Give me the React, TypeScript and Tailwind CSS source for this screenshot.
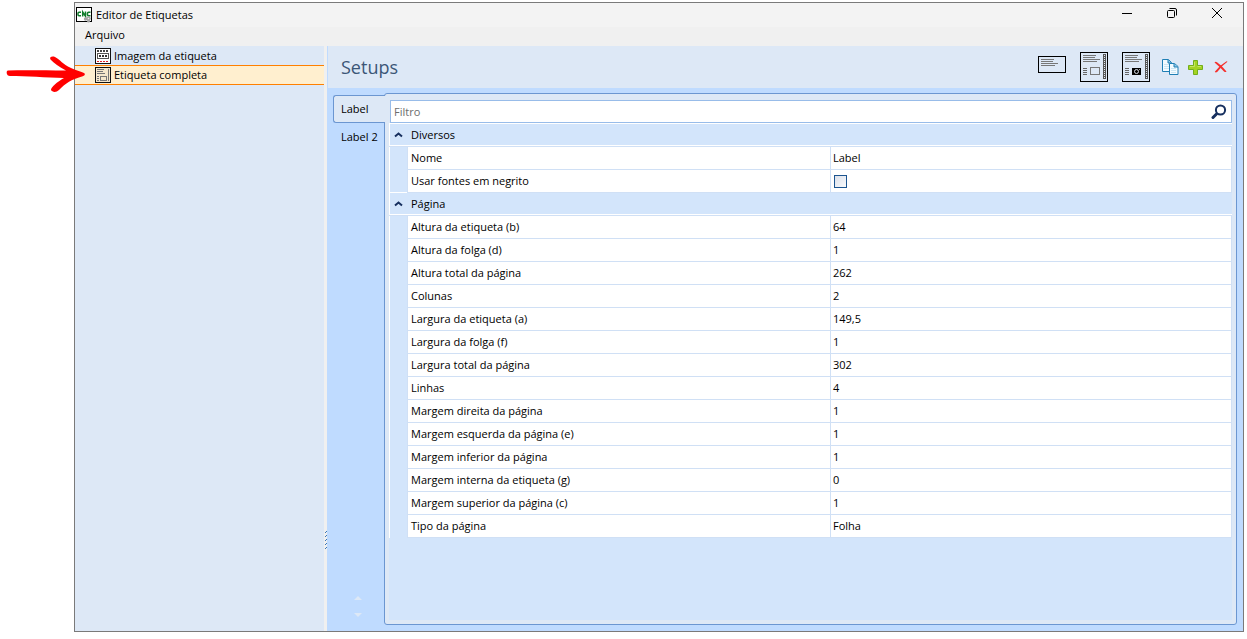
import React, { useState } from "react";

interface Property {
  name: string;
  value: string | boolean;
}

interface Category {
  title: string;
  items: Property[];
}

const categories: Category[] = [
  {
    title: "Diversos",
    items: [
      { name: "Nome", value: "Label" },
      { name: "Usar fontes em negrito", value: false },
    ],
  },
  {
    title: "Página",
    items: [
      { name: "Altura da etiqueta (b)", value: "64" },
      { name: "Altura da folga (d)", value: "1" },
      { name: "Altura total da página", value: "262" },
      { name: "Colunas", value: "2" },
      { name: "Largura da etiqueta (a)", value: "149,5" },
      { name: "Largura da folga (f)", value: "1" },
      { name: "Largura total da página", value: "302" },
      { name: "Linhas", value: "4" },
      { name: "Margem direita da página", value: "1" },
      { name: "Margem esquerda da página (e)", value: "1" },
      { name: "Margem inferior da página", value: "1" },
      { name: "Margem interna da etiqueta (g)", value: "0" },
      { name: "Margem superior da página (c)", value: "1" },
      { name: "Tipo da página", value: "Folha" },
    ],
  },
];

function AppIcon() {
  return (
    <svg width="16" height="16" viewBox="0 0 16 16" fill="none">
      <rect x="0.5" y="0.5" width="15" height="14" fill="#fff" stroke="#000" />
      <path
        d="M5 5.2H3Q2 5.200 2 6.200V7.800Q2 8.800 3 8.800H5M6.700 9.500V5l2.800 4.200V4.500M14.500 5.200H12.500Q11.500 5.200 11.500 6.200V7.800Q11.500 8.800 12.500 8.800H14.500"
        stroke="#0f7d2b"
        strokeWidth="1.500"
      />
      <g fill="#a5a5a5">
        <circle cx="9.500" cy="12" r="1.700" />
        <circle cx="12.500" cy="11.500" r="2.200" />
        <circle cx="12.500" cy="14" r="1.500" />
      </g>
      <circle cx="12.500" cy="11.500" r="0.800" fill="#eee" />
    </svg>
  );
}

function ImageLabelIcon() {
  return (
    <svg width="16" height="16" viewBox="0 0 16 16" shapeRendering="crispEdges" fill="none">
      <rect x="0.5" y="0.5" width="15" height="15" fill="#fff" stroke="#111" />
      <path d="M2 3h12" stroke="#444" strokeWidth="2" strokeDasharray="2 1" />
      <rect x="2.500" y="5.500" width="11" height="5" stroke="#555" />
      <path d="M4 8h8" stroke="#333" strokeWidth="2" strokeDasharray="2 1" />
      <path d="M2 13.500h12" stroke="#e0202a" strokeDasharray="2 1" />
    </svg>
  );
}

function FullLabelIcon() {
  return (
    <svg width="16" height="16" viewBox="0 0 16 16" shapeRendering="crispEdges" fill="none">
      <rect x="0.5" y="0.5" width="15" height="15" fill="#f5e7cc" stroke="#111" />
      <path d="M2 2.500h7M2 4.500h6M2 6.500h8M2 9.500h2M2 11.500h2M2 13.500h2M13.500 2v12" stroke="#777" />
      <rect x="5.500" y="9.500" width="6" height="4" stroke="#777" />
    </svg>
  );
}

function SimpleLayoutIcon() {
  return (
    <svg width="28" height="17" viewBox="0 0 28 17" shapeRendering="crispEdges" fill="none">
      <rect x="0.5" y="0.5" width="27" height="16" stroke="#000" />
      <path d="M3 3.500h13M3 5.500h12M3 7.500h17M3 9.500h14" stroke="#777" />
    </svg>
  );
}

function PageLayoutIcon({ camera = false }: { camera?: boolean }) {
  return (
    <svg width="28" height="30" viewBox="0 0 28 30" shapeRendering="crispEdges" fill="none">
      <rect x="0.5" y="0.5" width="27" height="29" stroke="#000" />
      <path d="M3 3.500h13M3 5.500h12M3 7.500h17M3 9.500h14" stroke="#777" />
      <path d="M3 16.500h4M3 18.500h4M3 20.500h4M3 22.500h4" stroke="#666" />
      <path d="M24.500 2v25" stroke="#555" strokeWidth="3" />
      <path d="M24.500 3v24" stroke="#dfe8f4" strokeDasharray="1 1" />
      {camera ? (
        <g>
          <path d="M10 16h9v7h-9z" fill="#000" />
          <circle cx="14.500" cy="19.500" r="2" stroke="#d5dce6" shapeRendering="auto" />
          <path d="M17 17h1v1h-1z" fill="#999" />
        </g>
      ) : (
        <rect x="10.500" y="15.500" width="9" height="7" stroke="#777" />
      )}
    </svg>
  );
}

function CopyIcon() {
  return (
    <svg width="17" height="16" viewBox="0 0 17 16" fill="#f4fbff" stroke="#1f7fb5">
      <path d="M0.500 0.500h6l3 3v9h-9z" />
      <path d="M6 0.500v3.500h3.500" fill="#8cc6e4" />
      <path d="M2 5.500h5M2 7.500h5M2 9.500h5" stroke="#cbe6f3" />
      <path d="M7.500 4.500h5l3.500 3v8h-8.500z" />
      <path d="M12 4.500v3.500h4" fill="#8cc6e4" />
      <path d="M9 9.500h5M9 11.500h5M9 13.500h5" stroke="#cbe6f3" />
    </svg>
  );
}

function AddIcon() {
  return (
    <svg width="15" height="15" viewBox="0 0 15 15">
      <path
        d="M5.500 0.500h4v5h5v4h-5v5h-4v-5h-5v-4h5z"
        fill="#a3d322"
        stroke="#72ae1b"
        strokeLinejoin="round"
      />
      <path d="M6.500 2v4.500H2M9.500 6.500H13" fill="none" stroke="#c3e661" />
    </svg>
  );
}

function DeleteIcon() {
  return (
    <svg width="14" height="12" viewBox="0 0 14 12" fill="#f5302d">
      <path d="M0.500 1.500Q1.500 0 3 1.200Q8 4.500 12.500 10.500Q11.500 11.500 10 10.500Q6 6 0.500 1.500Z" />
      <path d="M13.500 0.800Q8 4.500 3.200 11Q1.500 12 0.800 10.700Q5.500 4.500 12.500 0.300Z" />
    </svg>
  );
}

function SearchIcon() {
  return (
    <svg width="16" height="16" viewBox="0 0 16 16" fill="none" stroke="#17305f" strokeLinecap="round">
      <circle cx="9.500" cy="6" r="4.600" strokeWidth="2" />
      <path d="M5.500 10L2 13.500" strokeWidth="3" />
    </svg>
  );
}

function PropertyGrid() {
  return (
    <table className="w-full table-fixed border-collapse border-l border-white">
      <colgroup>
        <col className="w-[18px]" />
        <col />
        <col className="w-[401px]" />
      </colgroup>
      {categories.map((category) => (
        <tbody key={category.title}>
          <tr className="h-[23px]">
            <th
              colSpan={3}
              scope="rowgroup"
              className="border-y border-t-white border-b-[#d0e0f5] p-0 text-left font-normal shadow-[inset_0_-1px_0_#fff]"
            >
              <button type="button" aria-expanded="true" className="flex w-full items-center gap-2 pl-1">
                <svg width="9" height="6" viewBox="0 0 9 6" fill="none" stroke="#17305f" strokeWidth="2">
                  <path d="M1 4.500L4.500 1.500L8 4.500" />
                </svg>
                {category.title}
              </button>
            </th>
          </tr>
          {category.items.map((item) => (
            <tr key={item.name} className="h-[23px]">
              <td className="p-0" />
              <th
                scope="row"
                className="border border-[#d0e0f5] bg-white py-0 pr-0 pl-[3px] text-left font-normal whitespace-nowrap"
              >
                {item.name}
              </th>
              <td className="border border-[#d0e0f5] bg-white py-0 pr-0 pl-[2px]">
                {typeof item.value === "boolean" ? (
                  <input
                    type="checkbox"
                    aria-label={item.name}
                    defaultChecked={item.value}
                    className="ml-px block size-[13px] appearance-none border border-[#1d5590] bg-linear-to-br from-[#dbe0ea] to-[#fafbfc] checked:bg-[#1d5590]"
                  />
                ) : (
                  item.value
                )}
              </td>
            </tr>
          ))}
        </tbody>
      ))}
    </table>
  );
}

export default function App() {
  const [tab, setTab] = useState("Label");

  return (
    <div className="relative flex min-h-screen bg-white pt-[2px] pr-[3px] pb-[7px] pl-[74px] font-['Open_Sans','Noto_Sans',sans-serif] text-[11px] leading-4 text-black">
      <div className="flex min-w-0 flex-1 flex-col border border-[#7a7a7a] bg-[#f0f0f0]">
        <header className="flex h-6 items-center justify-between bg-[#f3f3f3] pl-px">
          <div className="flex items-center gap-1">
            <AppIcon />
            <h1>Editor de Etiquetas</h1>
          </div>
          <div className="flex items-center pr-[3px] pb-1">
            <button type="button" aria-label="Minimizar" className="flex w-[45px] justify-center">
              <svg width="11" height="10" viewBox="0 0 11 10" stroke="#000" shapeRendering="crispEdges">
                <path d="M0 5.500h10" />
              </svg>
            </button>
            <button type="button" aria-label="Restaurar" className="flex w-[45px] justify-center">
              <svg width="11" height="10" viewBox="0 0 11 10" fill="none" stroke="#000">
                <rect x="0.500" y="2.500" width="7" height="7" rx="1" />
                <path d="M2.500 0.500H8Q9.500 0.500 9.500 2v5.500" />
              </svg>
            </button>
            <button type="button" aria-label="Fechar" className="flex w-[45px] justify-center">
              <svg width="11" height="10" viewBox="0 0 11 10" stroke="#000">
                <path d="M0 0l10 10M10 0L0 10" />
              </svg>
            </button>
          </div>
        </header>

        <nav className="flex h-[19px] items-start pl-[10px]">
          <button type="button">Arquivo</button>
        </nav>

        <div className="flex flex-1">
          <aside className="flex w-[249px] flex-col bg-[#dde8f6]">
            <button type="button" className="flex h-[19px] items-center gap-[3px] pl-5">
              <ImageLabelIcon />
              Imagem da etiqueta
            </button>
            <button
              type="button"
              aria-current="true"
              className="flex h-5 items-center gap-[3px] border-y border-[#ff8000] bg-[#ffefcf] pl-5"
            >
              <FullLabelIcon />
              Etiqueta completa
            </button>
          </aside>

          {/* splitter */}
          <div className="flex w-[3px] flex-col justify-end pb-20">
            <svg width="3" height="20" viewBox="0 0 3 20" shapeRendering="crispEdges">
              {[0, 4, 8, 12, 16].map((y) => (
                <path key={y} d={`M2 ${y}h1v1h-1zM1 ${y + 1}h1v1h-1z`} fill="#3a77b8" />
              ))}
            </svg>
          </div>

          <main className="flex min-w-0 flex-1 flex-col border-l border-[#bfdbff] bg-[#bfdbff]">
            <div className="flex h-[42px] items-center justify-between bg-[#dde8f6] pr-[15px] pl-[13px]">
              <h2 className="text-lg text-[#3b5677]">Setups</h2>
              <div className="flex items-center">
                <button type="button" aria-label="Etiqueta simples" className="mr-[14px] pb-[5px]">
                  <SimpleLayoutIcon />
                </button>
                <button type="button" aria-label="Etiqueta com desenho" className="mr-[14px]">
                  <PageLayoutIcon />
                </button>
                <button type="button" aria-label="Etiqueta com foto" className="mr-3">
                  <PageLayoutIcon camera />
                </button>
                <button type="button" aria-label="Copiar" className="mr-[9px]">
                  <CopyIcon />
                </button>
                <button type="button" aria-label="Adicionar" className="mr-[11px]">
                  <AddIcon />
                </button>
                <button type="button" aria-label="Excluir">
                  <DeleteIcon />
                </button>
              </div>
            </div>

            <div className="flex flex-1 pt-[5px] pr-[6px] pb-[6px] pl-[5px]">
              <div className="z-10 -mr-px flex w-[52px] flex-col justify-between pt-[2px] pb-2">
                <div role="tablist" aria-orientation="vertical" className="flex flex-col">
                  {["Label", "Label 2"].map((name) => (
                    <button
                      key={name}
                      type="button"
                      role="tab"
                      aria-selected={tab === name}
                      onClick={() => setTab(name)}
                      className={`h-7 rounded-l-[3px] border border-r-0 pl-[7px] text-left whitespace-nowrap ${
                        tab === name ? "border-[#6b96d1] bg-[#dde8f6]" : "border-transparent"
                      }`}
                    >
                      {name}
                    </button>
                  ))}
                </div>
                <div className="flex flex-col items-center gap-[13px] pr-[3px]">
                  <button type="button" aria-label="Aba anterior">
                    <svg width="8" height="4" viewBox="0 0 8 4" fill="#dde8f6">
                      <path d="M0 4l4-4 4 4z" />
                    </svg>
                  </button>
                  <button type="button" aria-label="Próxima aba">
                    <svg width="8" height="4" viewBox="0 0 8 4" fill="#dde8f6">
                      <path d="M0 0l4 4 4-4z" />
                    </svg>
                  </button>
                </div>
              </div>

              <section
                role="tabpanel"
                aria-label={tab}
                className="flex min-w-0 flex-1 flex-col rounded-[3px] border border-[#6b96d1] bg-[#dde8f6] p-1"
              >
                <div className="flex flex-1 flex-col bg-[#d3e5fb]">
                  <div className="bg-[#dde8f6] pt-[2px] pl-px">
                    <div className="flex h-[23px] items-center border border-[#98bce9] bg-white pr-1 pl-[3px]">
                      <input
                        type="text"
                        aria-label="Filtro"
                        placeholder="Filtro"
                        className="min-w-0 flex-1 outline-none placeholder:text-[#6d6d6d]"
                      />
                      <button type="button" aria-label="Pesquisar">
                        <SearchIcon />
                      </button>
                    </div>
                  </div>
                  <PropertyGrid />
                </div>
              </section>
            </div>
          </main>
        </div>
      </div>

      {/* callout arrow, drawn over the window */}
      <svg
        className="pointer-events-none absolute top-[56px] left-[6px]"
        width="82"
        height="38"
        viewBox="0 0 82 38"
        fill="#ff0000"
      >
        <path d="M2 14.500C20 14 40 14.500 60 14.500C53 11 48 7 44.500 3.500C43 1 46 0 49 1C55 4 56 8 65 12C71 14.500 75 15.500 78 17C80 18.500 78 20 76 20.500C65 23.500 60 27 53 34C50 37 46 36 45 34C45 31 51 26 58 22C40 21.500 20 20 4 20C0 20 0 14.500 2 14.500Z" />
      </svg>
    </div>
  );
}
